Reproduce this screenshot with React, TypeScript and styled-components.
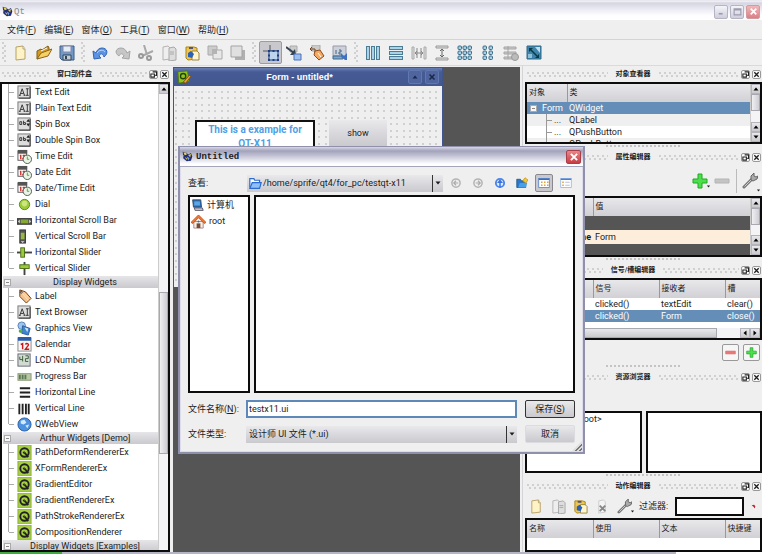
import React from "react";
import type { ReactNode } from "react";
import styled, { createGlobalStyle, css } from "styled-components";

const sans = `Roboto, "Noto Sans CJK SC", sans-serif`;
const ink = "#1c1c1c";

const GlobalStyle = createGlobalStyle`
  * { box-sizing: border-box; }
  body { margin: 0; background: #efefef; }
  body, button, input, select { font-family: ${sans}; font-size: 9px; line-height: 12px; color: ${ink}; }
  button, input, select { margin: 0; padding: 0; border: 0; background: none; }
  ul { list-style: none; margin: 0; padding: 0; }
  table { border-collapse: collapse; border-spacing: 0; }
  svg { display: block; flex: none; }
`;

/* ---------- icons ---------- */

const page = (x: number, y: number, fill: string, line: string) => (
  <path d={`M${x} ${y + 1}l5-1 2 2v11l-7 1z`} fill={fill} stroke={line} />
);

const calendarClock = (
  <>
    <rect x="1" y="2" width="9" height="10" fill="#fff" stroke="#555" />
    <rect x="1" y="1" width="10" height="4" fill="#555" />
    <path d="M3 7h1v4M6 7h2l-2 4" stroke="#c33" strokeWidth="1.500" fill="none" />
    <circle cx="11" cy="11" r="4.5" fill="#e8f4e4" stroke="#555" />
    <path d="M11 8v3h2" stroke="#4a4" fill="none" />
  </>
);

const textBox = (
  <>
    <rect x="1" y="1" width="13" height="13" fill="#ddd" stroke="#777" />
    <path d="M14 2v12H2" stroke="#333" fill="none" />
    <path d="M3 11l2.500-7L8 11M4 9h3M2 11h2M7 11h2M9.500 4h3M9.500 11h3M11 4v7" stroke="#333" fill="none" />
  </>
);

const spinBox = (
  <>
    <rect x="1" y="1" width="13" height="13" fill="#ddd" stroke="#777" />
    <path d="M14 2v12H2" stroke="#333" fill="none" />
    <path d="M3 5v3h2V5zM7 4v4h2V6H7" stroke="#333" fill="none" />
    <path d="M10 5l2-3 2 3zM10 7l2 3 2-3z" fill="#222" />
  </>
);

const demo = (
  <>
    <rect x="1" y="0" width="14" height="16" fill="#a6cf45" stroke="#8ab036" />
    <circle cx="8" cy="8" r="4.500" fill="none" stroke="#222" strokeWidth="2" />
    <path d="M8 8l4 5" stroke="#222" strokeWidth="2" />
    <path d="M6 8l2-2v4z" fill="#222" />
  </>
);

const tag = (
  <>
    <path d="M3 1l6 2 6 7-5 5-7-7z" fill="#f6c48c" stroke="#6a3a10" />
    <path d="M6 5l6 7M8 5l4 4" stroke="#fbe8cc" />
    <circle cx="4.500" cy="3.500" r="1" fill="#fff" stroke="#333" />
  </>
);

const grid3 = (xs: number[]) => (
  <>
    {xs.map((x) =>
      [3, 8, 13].map((y) => (
        <rect key={`${x}-${y}`} x={x - 2} y={y - 2} width="3.500" height="3.500" rx="1" fill="#a4cfe4" stroke="#3d6c85" />
      ))
    )}
  </>
);

const paste = (
  <>
    <path d="M2 2h8l3 1v11l-9 1-2-2z" fill="#f0c64a" stroke="#a8841c" />
    <path d="M8 6h5l2 2v7H8z" fill="#fff6cf" stroke="#998544" />
    <path d="M5 2h4v2H5z" fill="#557" />
    <path d="M4 8l3-2 3 3-2 4-4-1z" fill="#2b62b8" />
  </>
);

const copy = (
  <>
    {page(2, 1, "#eee", "#b4b4b4")}
    {page(8, 2, "#ddd", "#a8a8a8")}
    <path d="M9 7h4M9 9h4" stroke="#a8a8a8" />
  </>
);

const wrench = (
  <>
    <path d="M2 14l8-8" stroke="#777" strokeWidth="3" strokeLinecap="round" />
    <path d="M2.500 13.500l8-8" stroke="#ccc" />
    <path d="M9 7V3l3-3v3l2 1 2-1-1 3-4 2z" fill="#aaa" stroke="#666" />
  </>
);

const plus = (
  <path d="M6 1h4v5h5v4h-5v5H6v-5H1V6h5z" fill="#4be04b" stroke="#20a820" />
);

const icons: Record<string, ReactNode> = {
  qt: (
    <>
      <path d="M1 1l5 1 3 3 4-2 2 5-2 6-6 1-5-4z" fill="#232a78" />
      <path d="M2 2h4l1 3-3 1zM9 6l4-2-1 5zM4 9l3 1v3z" fill="#e4d548" />
      <path d="M7 8l4 2-2 4zM1 6h2v3z" fill="#6fa6dc" />
    </>
  ),
  new: (
    <>
      <path d="M3 2l7-1 2 3v10l-9 1z" fill="#fdf3c6" stroke="#b7a168" />
      <path d="M10 1v3h2" fill="#fff" stroke="#b7a168" />
    </>
  ),
  open: (
    <>
      <path d="M1 14V6l4-2 1 1 6-4 1 2v5z" fill="#d59a23" stroke="#7d5a15" />
      <path d="M1 14l4-6 11-4-4 7z" fill="#f6cf66" stroke="#8a6418" />
      <path d="M5 6l6-3" stroke="#fff" />
    </>
  ),
  save: (
    <>
      <path d="M1 1h14v14H3l-2-2z" fill="#6f9ac8" stroke="#3c5c84" />
      <path d="M4 1h8v6H4z" fill="#e4edf5" stroke="#88a" />
      <path d="M4 10h8v5H4z" fill="#c4ced8" stroke="#345" />
      <path d="M6 11h2v3H6z" fill="#345" />
    </>
  ),
  undo: (
    <>
      <path d="M1 6l1 8 7-1-2-2c1-3 4-3 5 1 5-4 3-9-2-9-3 0-5 2-6 5z" fill="#5c94e4" stroke="#3263b4" />
      <path d="M5 8c2-3 6-4 8-1" stroke="#b7d4f8" fill="none" />
    </>
  ),
  redo: (
    <path d="M15 6l-1 8-7-1 2-2C8 8 5 8 4 11-1 8 1 3 6 3c3 0 5 2 6 5z" fill="#c6c6c6" stroke="#a4a4a4" />
  ),
  cut: (
    <>
      <path d="M6 0l3 10M15 6L4 11" stroke="#a8a8a8" strokeWidth="2" />
      <circle cx="3" cy="11" r="2" fill="none" stroke="#999" strokeWidth="2" />
      <circle cx="11" cy="13" r="2" fill="none" stroke="#999" strokeWidth="2" />
    </>
  ),
  copy,
  paste,
  back: (
    <>
      <path d="M1 1h9v9H1z" fill="#ccc" stroke="#aaa" />
      <path d="M6 5h9v9H6z" fill="#e8e8e8" stroke="#aaa" />
      <path d="M5 4h5v5H5z" fill="#b4b4b4" />
    </>
  ),
  front: (
    <>
      <path d="M5 5h10v10H5z" fill="#b0b0b0" />
      <path d="M1 1h11v11H1z" fill="#e0e0e0" stroke="#a4a4a4" />
    </>
  ),
  widgets: (
    <>
      <path d="M7 0v8M0 6h16M5 14h4" stroke="#555" />
      <rect x="6" y="6" width="9" height="9" fill="#bcd4ee" stroke="#1c3e86" />
      <path d="M5 5h2v2H5zM9.500 5h2v2h-2zM14 5h2v2h-2zM5 9.500h2v2H5zM14 9.500h2v2h-2zM5 14h2v2H5zM9.500 14h2v2h-2zM14 14h2v2h-2z" fill="#1c3e86" />
    </>
  ),
  signals: (
    <>
      <path d="M4 1h7v6H4z" fill="#ccc" stroke="#aaa" />
      <path d="M0 2l8 6" stroke="#345" strokeWidth="2" />
      <path d="M10 10H4l5-6z" fill="#345" />
      <path d="M8 9h7v6H8z" fill="#9cc0f0" stroke="#4c72b8" />
    </>
  ),
  buddies: (
    <>
      <path d="M3 0h8v6H3z" fill="#ccc" stroke="#aaa" />
      <path d="M1 4h5v4M1 4l2-2M1 4l2 2" stroke="#742" fill="none" />
      <path d="M6 6l5-1 4 6-5 4-5-5z" fill="#f4a860" stroke="#8e4d1c" />
      <path d="M9 8l3 4" stroke="#fff" />
    </>
  ),
  taborder: (
    <>
      <path d="M1 1h13v10H1z" fill="#cdd2da" stroke="#99a" />
      <path d="M4 5v4M7 5h2v2H7v2h2" stroke="#468" fill="none" />
      <path d="M1 11h10v3H1z" fill="#78a9d8" stroke="#468" />
      <path d="M9 8l3 3 3-3v7h-2l-4-3z" fill="#3f73c2" />
    </>
  ),
  horiz: (
    <>
      {[1, 6, 11].map((x) => (
        <rect key={x} x={x + 0.5} y="1.500" width="3" height="13" fill="#a9d3e8" stroke="#4d7c95" />
      ))}
    </>
  ),
  vert: (
    <>
      {[1, 6, 11].map((y) => (
        <rect key={y} x="1.500" y={y + 0.5} width="13" height="3" fill="#a9d3e8" stroke="#4d7c95" />
      ))}
    </>
  ),
  hsplit: (
    <>
      <path d="M1 2h2v12H1zM13 2h2v12h-2z" fill="#ddd" stroke="#aaa" />
      <path d="M6 3v10M10 3v10M4 8h8M6 6L4 8l2 2M10 6l2 2-2 2" stroke="#888" fill="none" />
    </>
  ),
  vsplit: (
    <>
      <path d="M2 1h12v2H2zM2 13h12v2H2z" fill="#ddd" stroke="#999" />
      <path d="M8 4v8M6 6l2-2 2 2M6 10l2 2 2-2" stroke="#666" fill="none" />
    </>
  ),
  grid: grid3([3, 8, 13]),
  form: grid3([5, 11]),
  breakLayout: (
    <>
      <path d="M1 2h12v2H1zM1 7h12v2H1zM1 12h8v2H1z" fill="#ccc" stroke="#a4a4a4" />
      <path d="M5 1v13" stroke="#a4a4a4" />
      <circle cx="12" cy="12" r="3.500" fill="#bbb" stroke="#999" />
    </>
  ),
  adjust: (
    <>
      <path d="M1 1h14v13H1z" fill="#3f84ac" stroke="#2f6a8c" />
      <path d="M9 2h5v6z" fill="#bfe0ee" />
      <path d="M2 9h4v4H2z" fill="#8fc0d8" />
      <path d="M4 4l7 7" stroke="#0b3a44" strokeWidth="1.500" />
      <path d="M3 3h4L3 7zM13 13V9l-4 4z" fill="#0b3a44" />
    </>
  ),
  textBox,
  spinBox,
  calendarClock,
  dial: (
    <>
      <circle cx="8" cy="8" r="5.500" fill="#9ccb3a" stroke="#5d8a1c" />
      <circle cx="8" cy="7" r="3" fill="#cbe67f" />
    </>
  ),
  hscroll: (
    <>
      <rect x="0" y="6" width="16" height="6" fill="#555" stroke="#333" />
      <rect x="4" y="7" width="8" height="4" fill="#86a934" />
      <path d="M3 7v4L1 9zM13 7v4l2-2z" fill="#ddd" />
    </>
  ),
  vscroll: (
    <>
      <rect x="3" y="1" width="6" height="14" fill="#555" stroke="#333" />
      <rect x="4" y="4" width="4" height="7" fill="#96b944" />
      <path d="M4 13h4l-2 2z" fill="#ddd" />
    </>
  ),
  hslider: (
    <>
      <path d="M0 8h16" stroke="#444" strokeWidth="2" />
      <rect x="4" y="3" width="4" height="10" fill="#9ccb3a" stroke="#4d6f18" />
    </>
  ),
  vslider: (
    <>
      <path d="M8 1v14" stroke="#444" strokeWidth="2" />
      <rect x="3" y="4" width="10" height="4" fill="#9ccb3a" stroke="#4d6f18" />
    </>
  ),
  tag,
  graphics: (
    <>
      <circle cx="5" cy="5" r="4" fill="#9cc6ee" stroke="#5581bb" />
      <path d="M6 5l8 3-2 7-7-2z" fill="#3e84d4" stroke="#2d5d9c" />
      <path d="M2 9l4 1-1 3-3-1z" fill="#5a4" />
      <path d="M8 7l4 1-1 4z" fill="#cfe6fb" />
    </>
  ),
  calendar: (
    <>
      <rect x="1" y="1" width="14" height="14" fill="#f6f6f6" stroke="#888" />
      <rect x="1" y="0" width="14" height="4" fill="#2c5ea8" />
      <path d="M4 8l2-1v6M9 8c1-2 4-1 3 1l-3 4h4" stroke="#c8181c" strokeWidth="1.500" fill="none" />
    </>
  ),
  lcd: (
    <>
      <rect x="1" y="1" width="13" height="13" fill="#d0dccf" stroke="#667" />
      <path d="M3 4v3h3M6 3v6M9 3h3v3H9v3h3" stroke="#385a38" fill="none" />
    </>
  ),
  progress: (
    <>
      <rect x="1" y="5" width="14" height="7" fill="#b9c8a4" stroke="#889978" />
      <path d="M3 6v5M6 6v5M9 6v5" stroke="#5d7855" strokeWidth="2" />
    </>
  ),
  hline: <path d="M3 3.500h11M3 8h11M3 12.500h11" stroke="#222" strokeWidth="2" />,
  vline: <path d="M2.500 3v11M6 3v11M9.500 3v11M12.500 3v11" stroke="#222" strokeWidth="2" />,
  web: (
    <>
      <circle cx="8" cy="8" r="7" fill="#4d92e0" stroke="#2a5da8" />
      <path d="M4 4l4-1 2 3-3 2-3-1zM9 9l4-1-2 4z" fill="#d6e9fb" />
    </>
  ),
  demo,
  designer: (
    <>
      <path d="M1 2l11-1 2 12-12 2z" fill="#8fc31f" stroke="#4f7a10" />
      <circle cx="7" cy="7" r="3" fill="none" stroke="#244006" strokeWidth="1.500" />
      <path d="M7 14l7-8 2 1-6 8z" fill="#f0a030" stroke="#7a4a10" />
    </>
  ),
  plus,
  redMinus: <path d="M1 6h14v4H1z" fill="#e87878" stroke="#d86a6a" />,
  minus: <path d="M1 6h14v4H1z" fill="#c4c4c4" stroke="#b4b4b4" />,
  wrench,
  remove: (
    <>
      {page(4, 1, "#f4f4f4", "#ccc")}
      <path d="M5 7l6 6M11 7l-6 6" stroke="#888" strokeWidth="2" />
    </>
  ),
  clear: <path d="M2 4l8-2 4 5-2 7-4-5z" fill="#c8202c" />,
  folder: (
    <>
      <path d="M1 13V2h5l1 2h6v3" fill="#fff" stroke="#2c6cd0" strokeWidth="1.500" />
      <path d="M1 14l3-7h11l-2 7z" fill="#8fc0f8" stroke="#2c6cd0" strokeWidth="1.500" />
    </>
  ),
  prev: (
    <>
      <circle cx="8" cy="8" r="5.500" fill="#eee" stroke="#b4b4b4" strokeWidth="2" />
      <path d="M5 8h6M8 5L5 8l3 3" stroke="#aaa" strokeWidth="1.500" fill="none" />
    </>
  ),
  next: (
    <>
      <circle cx="8" cy="8" r="5.500" fill="#eee" stroke="#b4b4b4" strokeWidth="2" />
      <path d="M5 8h6M8 5l3 3-3 3" stroke="#aaa" strokeWidth="1.500" fill="none" />
    </>
  ),
  up: (
    <>
      <circle cx="8" cy="8" r="5.500" fill="#dfeeff" stroke="#4a84ec" strokeWidth="2.500" />
      <path d="M8 3l4 5H9v6H7V8H4z" fill="#3a74dc" />
    </>
  ),
  newFolder: (
    <>
      <path d="M1 3h5l1 2h6v9H1z" fill="#2c78c8" stroke="#1c5088" />
      <path d="M3 14l2-6h10l-2 6z" fill="#48a0e8" />
      <path d="M12 1l4 3-3 4-4-3z" fill="#f6c832" stroke="#c89010" />
    </>
  ),
  listView: (
    <>
      <rect x="1" y="2" width="14" height="12" fill="#fff" stroke="#4878c8" />
      <path d="M1 3h14" stroke="#3a6cc4" strokeWidth="2" />
      <path d="M4 7h2M8 7h2M12 7h2M4 11h2M8 11h2M12 11h2" stroke="#e0a040" strokeWidth="2" />
    </>
  ),
  detailView: (
    <>
      <rect x="1" y="2" width="14" height="12" fill="#fff" stroke="#8cb0e0" />
      <path d="M1 3h14" stroke="#4a80d4" strokeWidth="2" />
      <path d="M3 7h2M3 11h2" stroke="#e0a040" strokeWidth="2" />
      <path d="M7 7h6M7 11h6" stroke="#aac" />
    </>
  ),
  computer: (
    <>
      <path d="M2 1h10l1 9H3z" fill="#2b6db8" stroke="#345" />
      <path d="M4 3h7v5H4z" fill="#5aa8e8" />
      <path d="M4 11h10l1 3H5z" fill="#ccd" stroke="#445" />
    </>
  ),
  home: (
    <>
      <path d="M3 8h10v7H3z" fill="#f4efe8" stroke="#a88" />
      <path d="M0 9l8-8 8 8-2 1-6-6-6 6z" fill="#f07830" stroke="#c05420" />
      <path d="M6 10h4v5H6z" fill="#7a4a32" />
      <circle cx="8" cy="8" r="1" fill="#468" />
    </>
  ),
  float: (
    <>
      <path d="M6 2h9v8h-3" fill="none" stroke="#222" strokeWidth="2.500" />
      <path d="M2 7h8v7H2z" fill="#fff" stroke="#222" strokeWidth="2.500" />
    </>
  ),
  cross: <path d="M3 3l10 10M13 3L3 13" stroke="currentColor" strokeWidth="3" />,
  minimize: <path d="M3 12h7" stroke="currentColor" strokeWidth="3" />,
  maximize: <path d="M2 3h12v11H2zM2 5h12" fill="none" stroke="currentColor" strokeWidth="2" />,
  arrowUp: <path d="M3 11l5-6 5 6z" fill="currentColor" />,
  arrowDown: <path d="M3 5l5 6 5-6z" fill="currentColor" />,
  arrowLeft: <path d="M11 3L5 8l6 5z" fill="currentColor" />,
  arrowRight: <path d="M5 3l6 5-6 5z" fill="currentColor" />,
};

const Icon = ({ name, size = 16 }: { name: string; size?: number }) => (
  <svg width={size} height={size} viewBox="0 0 16 16" aria-hidden="true">
    {icons[name]}
  </svg>
);

/* ---------- shared parts ---------- */

const raised = css`
  background: linear-gradient(#e9e9ec, #c9c9ce);
`;

const dotRows = css`
  background-image: radial-gradient(circle at 1px 1px, #d0d0d0 1px, transparent 1px),
    radial-gradient(circle at 3px 4px, #d0d0d0 1px, transparent 1px);
  background-size: 5px 5px;
`;

const Page = styled.div`
  display: flex;
  flex-direction: column;
  height: 100vh;
  overflow: hidden;
  background: #efefef;
`;

const TitleBar = styled.header`
  display: flex;
  align-items: center;
  gap: 1px;
  height: 20px;
  padding: 3px 2px 0;
  background: linear-gradient(#dcdce4 0, #f4f4f8 1px, #d6d6e2 3px, #e6e6ef 8px, #fdfdff 15px, #fff 19px);
`;

const AppName = styled.h1`
  flex: 1;
  margin: 0;
  font: 9px/12px "Liberation Mono", monospace;
  color: #888;
`;

const FrameButton = styled.button<{ $close?: boolean }>`
  display: grid;
  place-items: center;
  width: 14px;
  height: 14px;
  margin-left: 1px;
  border: 1px solid ${(p) => (p.$close ? "#d49a9e" : "#b4b4c4")};
  border-radius: 2px;
  background: ${(p) => (p.$close ? "linear-gradient(#f0b8b8, #d98088)" : "linear-gradient(#f4f4fa, #cfcfdc)")};
  color: ${(p) => (p.$close ? "#fff" : "#9c9cae")};
`;

const MenuBar = styled.nav`
  display: flex;
  align-items: center;
  gap: 8px;
  height: 20px;
  padding-left: 7px;
  border-bottom: 1px solid #d4d4d4;
`;

const MenuItem = styled.button`
  white-space: nowrap;
`;

const ToolBar = styled.div`
  display: flex;
  align-items: center;
  gap: 10px;
  height: 26px;
  padding-left: 9px;
  border-bottom: 1px solid #dadada;
  background: #f0f0f0;
`;

const ToolGroup = styled.div`
  position: relative;
  display: flex;
  &::before {
    content: "";
    position: absolute;
    left: -7px;
    top: 1px;
    width: 5px;
    height: 20px;
    ${dotRows}
  }
`;

const ToolButton = styled.button<{ $active?: boolean }>`
  display: grid;
  place-items: center;
  width: 23px;
  height: 23px;
  border: 1px solid ${(p) => (p.$active ? "#9c9ca0" : "transparent")};
  border-radius: 2px;
  background: ${(p) => (p.$active ? "#c9c9cd" : "none")};
`;

const Workspace = styled.main`
  flex: 1;
  min-height: 0;
  display: grid;
  grid-template-columns: 170px minmax(0, 1fr) 240px;
  column-gap: 2px;
`;

const Dock = styled.aside`
  display: flex;
  flex-direction: column;
  min-height: 0;
  overflow: hidden;
`;

const RightDock = styled(Dock)`
  padding-left: 2px;
  border-left: 1px solid #d4d4d8;
`;

const DockTitle = styled.div`
  display: flex;
  align-items: center;
  flex: none;
  gap: 2px;
  height: 16px;
  padding: 0 1px 0 2px;
`;

const Grip = styled.span`
  flex: 1;
  height: 5px;
  ${dotRows}
`;

const DockName = styled.h2`
  margin: 0;
  padding: 0 6px;
  font-size: 7px;
  line-height: 12px;
  font-weight: 600;
`;

const DockButton = styled.button`
  display: grid;
  place-items: center;
  width: 9px;
  height: 9px;
  border: 1px solid #999;
  border-radius: 2px;
  background: #fafafa;
`;

const Splitter = styled.div`
  flex: none;
  height: 5px;
  padding: 1px 0;
  &::before {
    content: "";
    display: block;
    width: 76px;
    height: 2px;
    margin: 0 auto;
    background: radial-gradient(circle at 1px 1px, #c4c4c4 1px, transparent 1px) 0 0 / 4px 2px;
  }
`;

const Box = styled.div<{ $height?: number; $grow?: boolean }>`
  display: flex;
  min-width: 0;
  overflow: hidden;
  border: 2px solid #0c0c0c;
  background: #fff;
  flex: ${(p) => (p.$grow ? "1 1 0" : "none")};
  height: ${(p) => (p.$height ? `${p.$height}px` : "auto")};
`;

const Scroll = styled.div`
  display: flex;
  flex-direction: column;
  flex: none;
  width: 10px;
  background: #f4f4f6;
  border-left: 1px solid #ccc;
`;

const ScrollButton = styled.button`
  display: grid;
  place-items: center;
  flex: none;
  width: 10px;
  height: 10px;
  border: 1px solid #b4b4bc;
  ${raised}
  color: #000;
`;

const Thumb = styled.div<{ $before?: number; $size: number }>`
  flex: none;
  margin-top: ${(p) => p.$before ?? 0}px;
  margin-bottom: auto;
  height: ${(p) => p.$size}px;
  border: 1px solid #a8a8b0;
  background: linear-gradient(90deg, #f0f0f3, #cdcdd3);
`;

/* ---------- widget box ---------- */

const WidgetList = styled.div`
  flex: 1;
  min-width: 0;
  padding-left: 1px;
`;

const GroupHead = styled.button`
  display: flex;
  align-items: center;
  width: 100%;
  height: 12px;
  background: linear-gradient(#e6e6e9, #c9c9ce);
`;

const GroupName = styled.span`
  flex: 1;
  text-align: center;
`;

const Expander = styled.span`
  display: grid;
  place-items: center;
  flex: none;
  width: 7px;
  height: 7px;
  margin: 0 1px;
  border: 1px solid #aaa;
  background: #f8f8f8;
  &::before {
    content: "";
    width: 3px;
    height: 1px;
    background: #888;
  }
`;

const WidgetRow = styled.li`
  display: flex;
  align-items: center;
  gap: 3px;
  height: 16px;
  margin-left: 5px;
  border-left: 1px solid #aaa;
  white-space: nowrap;
  &::before {
    content: "";
    width: 5px;
    height: 1px;
    background: #aaa;
  }
  &:last-child {
    border-image: linear-gradient(#aaa 50%, transparent 50%) 1;
  }
`;

type Group = { name?: string; items: [string, string][] };

const groups: Group[] = [
  {
    items: [
      ["textBox", "Text Edit"],
      ["textBox", "Plain Text Edit"],
      ["spinBox", "Spin Box"],
      ["spinBox", "Double Spin Box"],
      ["calendarClock", "Time Edit"],
      ["calendarClock", "Date Edit"],
      ["calendarClock", "Date/Time Edit"],
      ["dial", "Dial"],
      ["hscroll", "Horizontal Scroll Bar"],
      ["vscroll", "Vertical Scroll Bar"],
      ["hslider", "Horizontal Slider"],
      ["vslider", "Vertical Slider"],
    ],
  },
  {
    name: "Display Widgets",
    items: [
      ["tag", "Label"],
      ["textBox", "Text Browser"],
      ["graphics", "Graphics View"],
      ["calendar", "Calendar"],
      ["lcd", "LCD Number"],
      ["progress", "Progress Bar"],
      ["hline", "Horizontal Line"],
      ["vline", "Vertical Line"],
      ["web", "QWebView"],
    ],
  },
  {
    name: "Arthur Widgets [Demo]",
    items: [
      ["demo", "PathDeformRendererEx"],
      ["demo", "XFormRendererEx"],
      ["demo", "GradientEditor"],
      ["demo", "GradientRendererEx"],
      ["demo", "PathStrokeRendererEx"],
      ["demo", "CompositionRenderer"],
    ],
  },
  { name: "Display Widgets [Examples]", items: [] },
];

/* ---------- form window ---------- */

const Mdi = styled.section`
  position: relative;
  margin: 1px 0 0 1px;
  background: #555;
`;

const FormWindow = styled.article`
  position: absolute;
  left: 0;
  top: 0;
  width: 270px;
  height: 221px;
  border: 1px solid #40558c;
  background: #efefef;
`;

const FormTitle = styled.div`
  display: flex;
  align-items: center;
  gap: 3px;
  height: 18px;
  padding: 0 3px;
  background: linear-gradient(#6a80b4, #465b96 4px, #43588f);
  color: #fff;
`;

const FormName = styled.h2`
  flex: 1;
  margin: 0;
  text-align: center;
  font: bold 9px/12px "Liberation Sans", sans-serif;
`;

const FormButton = styled.button`
  display: grid;
  place-items: center;
  width: 14px;
  height: 14px;
  border: 1px solid #6078ae;
  border-radius: 2px;
  background: #4f659f;
  color: #1b2748;
`;

const FormCanvas = styled.div`
  display: flex;
  align-items: flex-start;
  gap: 14px;
  height: 200px;
  padding: 34px 21px;
  background-image: radial-gradient(circle at 2px 6px, #d0d0d0 1px, transparent 1px),
    radial-gradient(circle at 9px 6px, #d0d0d0 1px, transparent 1px),
    radial-gradient(circle at 2px 12px, #d0d0d0 1px, transparent 1px),
    radial-gradient(circle at 9px 12px, #d0d0d0 1px, transparent 1px);
  background-size: 13px 13px;
`;

const ExampleText = styled.p`
  width: 120px;
  height: 60px;
  margin: 0;
  border: 2px solid #111;
  background: #fff;
  color: #4f9fe6;
  text-align: center;
  font-weight: 700;
  font-size: 10px;
  line-height: 14px;
  padding: 1px 6px;
`;

const ShowButton = styled.button`
  width: 58px;
  height: 26px;
  ${raised}
`;

/* ---------- data tables ---------- */

const Table = styled.table`
  width: 100%;
  table-layout: fixed;
  align-self: flex-start;
  th {
    height: 18px;
    padding: 0 2px;
    text-align: left;
    font-weight: 400;
    font-size: 8px;
    white-space: nowrap;
    border-right: 1px solid #999;
    background: linear-gradient(#e8e8eb, #d0d0d5);
  }
  th:last-child { border-right: 0; }
  td {
    height: 12px;
    padding: 0 2px;
    line-height: 12px;
    white-space: nowrap;
    overflow: hidden;
  }
`;

const Row = styled.tr<{ $tone?: "selected" | "even" | "dark" | "cream" }>`
  ${(p) => p.$tone === "selected" && css`background: #648eb8; color: #fff;`}
  ${(p) => p.$tone === "even" && css`background: #efefef;`}
  ${(p) => p.$tone === "dark" && css`background: #555; td { height: 14px; }`}
  ${(p) => p.$tone === "cream" && css`background: #fdeedb; td { height: 14px; }`}
`;

const FirstCell = styled.div`
  display: flex;
  align-items: center;
  gap: 4px;
`;

const Branch = styled.div`
  margin-left: 17px;
  padding-left: 7px;
  border-left: 1px solid #999;
  background: linear-gradient(#999, #999) 0 6px / 5px 1px no-repeat;
`;

const PropName = styled.td`
  text-align: right;
  font-weight: 700;
`;

const Stack = styled.div`
  display: flex;
  flex-direction: column;
  width: 100%;
`;

const HScroll = styled.div`
  display: flex;
  flex: none;
  height: 10px;
  margin-top: auto;
  background: #f4f4f6;
`;

const HThumb = styled.div`
  width: 190px;
  margin-right: auto;
  border: 1px solid #a8a8b0;
  ${raised}
`;

const PropTools = styled.div`
  display: flex;
  align-items: center;
  justify-content: flex-end;
  flex: none;
  gap: 6px;
  height: 31px;
  padding-right: 4px;
`;

const PropButton = styled.button<{ $divided?: boolean }>`
  position: relative;
  display: flex;
  ${(p) => p.$divided && css`border-left: 1px solid #bbb; padding: 4px 0 4px 5px;`}
`;

const MenuMark = styled.span`
  position: absolute;
  right: -3px;
  bottom: 0;
`;

const SignalTools = styled.div`
  display: flex;
  align-items: center;
  justify-content: flex-end;
  flex: none;
  gap: 4px;
  height: 24px;
  padding-right: 2px;
`;

const SquareButton = styled.button`
  display: grid;
  place-items: center;
  width: 17px;
  height: 17px;
  border: 1px solid #999;
  border-radius: 2px;
  background: #f6f6f6;
`;

const Resources = styled.div`
  display: flex;
  flex: none;
  gap: 4px;
  margin-top: 26px;
`;

const ResourceBox = styled(Box)`
  flex: 1;
  height: 62px;
  padding: 0 0 0 12px;
`;

const ActionTools = styled.div`
  display: flex;
  align-items: center;
  flex: none;
  gap: 7px;
  height: 24px;
  padding: 0 6px 0 4px;
`;

const FilterLabel = styled.label`
  white-space: nowrap;
`;

const FilterInput = styled.input`
  flex: 1;
  min-width: 0;
  height: 19px;
  border: 2px solid #0c0c0c;
  background: #fff;
`;

const BottomEdge = styled.footer`
  flex: none;
  height: 2px;
  background: linear-gradient(90deg, #3faa3f 62px, #b4b4c4 62px, #b4b4c4 676px, #fff 676px);
`;

/* ---------- file dialog ---------- */

const Dialog = styled.section`
  position: absolute;
  left: 178px;
  top: 146px;
  width: 407px;
  height: 308px;
  display: flex;
  flex-direction: column;
  border: 2px solid #8f90ac;
  border-top-width: 1px;
  background: #efefef;
  box-shadow: inset 0 0 0 1px #dcdcea;
`;

const DialogTitle = styled.div`
  display: flex;
  align-items: center;
  gap: 3px;
  flex: none;
  height: 20px;
  padding: 0 2px;
  border-bottom: 1px solid #a4a4ba;
  background: linear-gradient(#d8d8e4, #a2a2bc 4px, #c4c4d6 9px, #fff 17px);
`;

const DialogName = styled.h2`
  flex: 1;
  margin: 0;
  font: bold 9px/12px "Liberation Mono", monospace;
`;

const CloseButton = styled.button`
  display: grid;
  place-items: center;
  width: 15px;
  height: 14px;
  border: 1px solid #a8404a;
  border-radius: 2px;
  background: linear-gradient(#e88888, #c83c44);
  color: #fff;
`;

const DialogBody = styled.form`
  flex: 1;
  display: grid;
  grid-template-columns: 50px minmax(0, 1fr) 50px;
  grid-template-rows: 18px 199px;
  column-gap: 8px;
  align-content: start;
  padding: 7px 8px;
`;

const LookRow = styled.div`
  grid-column: 2 / 4;
  display: flex;
  align-items: center;
  justify-content: space-between;
  margin-left: 1px;
`;

const Lists = styled.div`
  grid-column: 1 / 4;
  display: grid;
  grid-template-columns: 62px minmax(0, 1fr);
  gap: 4px;
  padding-top: 3px;
  margin-bottom: -2px;
`;

const ListBox = styled.ul`
  border: 2px solid #0c0c0c;
  background: #fff;
`;

const Place = styled.li`
  display: flex;
  align-items: center;
  gap: 3px;
  height: 16px;
  padding-left: 1px;
`;

const FieldLabel = styled.label`
  align-self: center;
  white-space: nowrap;
`;

const Combo = styled.div<{ $width?: number }>`
  position: relative;
  display: flex;
  align-items: center;
  align-self: center;
  width: ${(p) => (p.$width ? `${p.$width}px` : "100%")};
  height: 17px;
  ${raised}
`;

const ComboMark = styled.span`
  position: absolute;
  right: 0;
  top: 0;
  display: grid;
  place-items: center;
  width: 11px;
  height: 100%;
  border-left: 1px solid #333;
  pointer-events: none;
`;

const Select = styled.select<{ $icon?: boolean }>`
  appearance: none;
  width: 100%;
  height: 100%;
  padding-left: ${(p) => (p.$icon ? 1 : 3)}px;
`;

const IconPad = styled.span`
  padding-left: 2px;
`;

const ViewButton = styled.button<{ $active?: boolean }>`
  display: grid;
  place-items: center;
  width: 18px;
  height: 18px;
  border: 1px solid ${(p) => (p.$active ? "#88888e" : "transparent")};
  border-radius: 2px;
  background: ${(p) => (p.$active ? "#c9c9cd" : "none")};
`;

const Fields = styled.div`
  grid-column: 1 / 4;
  display: grid;
  grid-template-columns: 50px minmax(0, 1fr) 50px;
  grid-auto-rows: 18px;
  gap: 7px 8px;
  padding-top: 9px;
`;

const NameInput = styled.input`
  align-self: center;
  width: 100%;
  height: 18px;
  padding: 0 1px;
  border: 2px solid #5e88b8;
  background: #fff;
`;

const DialogButton = styled.button<{ $default?: boolean }>`
  height: 18px;
  border: 1px solid ${(p) => (p.$default ? "#333" : "#dcdce0")};
  border-radius: 2px;
  ${raised}
`;

const SizeGrip = styled.span`
  position: absolute;
  right: 1px;
  bottom: 1px;
  width: 10px;
  height: 10px;
  clip-path: polygon(100% 0, 100% 100%, 0 100%);
  background: repeating-linear-gradient(135deg, #777 0 1px, #ddd 1px 3px);
`;

/* ---------- composition ---------- */

const Title = ({ children }: { children: ReactNode }) => (
  <DockTitle>
    <Grip />
    <DockName>{children}</DockName>
    <Grip />
    <DockButton aria-label="Float"><Icon name="float" size={7} /></DockButton>
    <DockButton aria-label="Close"><Icon name="cross" size={7} /></DockButton>
  </DockTitle>
);

const ShortScroll = () => (
  <Scroll>
    <ScrollButton aria-label="Scroll up"><Icon name="arrowUp" size={8} /></ScrollButton>
    <Thumb $size={17} />
    <ScrollButton aria-label="Page up"><Icon name="arrowUp" size={8} /></ScrollButton>
    <ScrollButton aria-label="Scroll down"><Icon name="arrowDown" size={8} /></ScrollButton>
  </Scroll>
);

type ToolIconProps = { name: string; label: string; size?: number; menu?: boolean; divided?: boolean };

const ToolIcon = ({ name, label, size = 15, menu, divided }: ToolIconProps) => (
  <PropButton aria-label={label} $divided={divided}>
    <Icon name={name} size={size} />
    {menu && <MenuMark><Icon name="arrowDown" size={5} /></MenuMark>}
  </PropButton>
);

const menus: [string, string][] = [
  ["文件", "F"],
  ["编辑", "E"],
  ["窗体", "O"],
  ["工具", "T"],
  ["窗口", "W"],
  ["帮助", "H"],
];

const tools = [
  ["new", "open", "save"],
  ["undo", "redo", "cut", "copy", "paste", "back", "front"],
  ["widgets", "signals", "buddies", "taborder"],
  ["horiz", "vert", "hsplit", "vsplit", "grid", "form", "breakLayout", "adjust"],
];

const WidgetBox = () => (
  <Dock>
    <Title>窗口部件盒</Title>
    <Box $grow>
      <WidgetList>
        {groups.map((group, i) => (
          <section key={i}>
            {group.name && (
              <GroupHead>
                <Expander />
                <GroupName>{group.name}</GroupName>
              </GroupHead>
            )}
            <ul>
              {group.items.map(([icon, label]) => (
                <WidgetRow key={label}>
                  <Icon name={icon} size={15} />
                  {label}
                </WidgetRow>
              ))}
            </ul>
          </section>
        ))}
      </WidgetList>
      <Scroll>
        <ScrollButton aria-label="Scroll up"><Icon name="arrowUp" size={8} /></ScrollButton>
        <Thumb $before={198} $size={162} />
      </Scroll>
    </Box>
  </Dock>
);

const Inspectors = () => (
  <RightDock>
    <Title>对象查看器</Title>
    <Box $height={62}>
      <Table>
        <colgroup><col width="40" /><col /></colgroup>
        <thead><tr><th>对象</th><th>类</th></tr></thead>
        <tbody>
          <Row $tone="selected">
            <td><FirstCell><Expander />Form</FirstCell></td>
            <td>QWidget</td>
          </Row>
          <Row $tone="even"><td><Branch>...</Branch></td><td>QLabel</td></Row>
          <Row><td><Branch>...</Branch></td><td>QPushButton</td></Row>
          <Row $tone="even"><td><Branch>...</Branch></td><td>QPushButton</td></Row>
        </tbody>
      </Table>
      <ShortScroll />
    </Box>
    <Splitter />

    <Title>属性编辑器</Title>
    <PropTools>
      <ToolIcon name="plus" label="Add property" size={16} menu />
      <ToolIcon name="minus" label="Remove property" size={16} />
      <ToolIcon name="wrench" label="Configure" size={16} menu divided />
    </PropTools>
    <Box $height={61}>
      <Table>
        <colgroup><col width="66" /><col /></colgroup>
        <thead><tr><th>属性</th><th>值</th></tr></thead>
        <tbody>
          <Row $tone="dark"><td /><td /></Row>
          <Row $tone="cream"><PropName>objectName</PropName><td>Form</td></Row>
          <Row $tone="dark"><td /><td /></Row>
        </tbody>
      </Table>
      <ShortScroll />
    </Box>
    <Splitter />

    <Title>信号/槽编辑器</Title>
    <Box $height={62}>
      <Stack>
        <Table>
          <colgroup><col width="66" /><col width="66" /><col width="66" /><col /></colgroup>
          <thead><tr><th>发送者</th><th>信号</th><th>接收者</th><th>槽</th></tr></thead>
          <tbody>
            <Row><td>pushButton</td><td>clicked()</td><td>textEdit</td><td>clear()</td></Row>
            <Row $tone="selected"><td>pushButton</td><td>clicked()</td><td>Form</td><td>close()</td></Row>
          </tbody>
        </Table>
        <HScroll>
          <HThumb />
          <ScrollButton aria-label="Scroll left"><Icon name="arrowLeft" size={8} /></ScrollButton>
          <ScrollButton aria-label="Scroll right"><Icon name="arrowRight" size={8} /></ScrollButton>
        </HScroll>
      </Stack>
    </Box>
    <SignalTools>
      <SquareButton aria-label="Remove"><Icon name="redMinus" size={11} /></SquareButton>
      <SquareButton aria-label="Add"><Icon name="plus" size={11} /></SquareButton>
    </SignalTools>
    <Splitter />

    <Title>资源浏览器</Title>
    <Resources>
      <ResourceBox>&lt;resource root&gt;</ResourceBox>
      <ResourceBox />
    </Resources>
    <Splitter />

    <Title>动作编辑器</Title>
    <ActionTools>
      <ToolIcon name="new" label="New action" />
      <ToolIcon name="copy" label="Copy" />
      <ToolIcon name="paste" label="Paste" />
      <ToolIcon name="remove" label="Delete" />
      <ToolIcon name="wrench" label="Configure" menu />
      <FilterLabel htmlFor="filter">过滤器:</FilterLabel>
      <FilterInput id="filter" />
      <ToolIcon name="clear" label="Clear filter" size={5} />
    </ActionTools>
    <Box $grow>
      <Table>
        <colgroup><col width="66" /><col width="66" /><col width="66" /><col /></colgroup>
        <thead><tr><th>名称</th><th>使用</th><th>文本</th><th>快捷键</th></tr></thead>
      </Table>
    </Box>
  </RightDock>
);

const SaveDialog = () => (
  <Dialog role="dialog" aria-label="Untitled">
    <DialogTitle>
      <Icon name="qt" size={11} />
      <DialogName>Untitled</DialogName>
      <CloseButton aria-label="Close"><Icon name="cross" size={10} /></CloseButton>
    </DialogTitle>
    <DialogBody onSubmit={(e) => e.preventDefault()}>
      <FieldLabel htmlFor="look">查看:</FieldLabel>
      <LookRow>
        <Combo $width={196}>
          <IconPad><Icon name="folder" size={13} /></IconPad>
          <Select id="look" $icon>
            <option>/home/sprife/qt4/for_pc/testqt-x11</option>
          </Select>
          <ComboMark><Icon name="arrowDown" size={8} /></ComboMark>
        </Combo>
        {["prev", "next", "up", "newFolder", "listView", "detailView"].map((name) => (
          <ViewButton key={name} type="button" aria-label={name} $active={name === "listView"}>
            <Icon name={name} size={12} />
          </ViewButton>
        ))}
      </LookRow>
      <Lists>
        <ListBox>
          <Place><Icon name="computer" size={13} />计算机</Place>
          <Place><Icon name="home" size={15} />root</Place>
        </ListBox>
        <ListBox />
      </Lists>
      <Fields>
        <FieldLabel htmlFor="name">文件名称(<u>N</u>):</FieldLabel>
        <NameInput id="name" defaultValue="testx11.ui" />
        <DialogButton $default>保存(<u>S</u>)</DialogButton>
        <FieldLabel htmlFor="type">文件类型:</FieldLabel>
        <Combo>
          <Select id="type"><option>设计师 UI 文件 (*.ui)</option></Select>
          <ComboMark><Icon name="arrowDown" size={8} /></ComboMark>
        </Combo>
        <DialogButton type="button">取消</DialogButton>
      </Fields>
    </DialogBody>
    <SizeGrip />
  </Dialog>
);

export default function App() {
  return (
    <Page>
      <GlobalStyle />
      <TitleBar>
        <Icon name="qt" size={11} />
        <AppName>Qt</AppName>
        <FrameButton aria-label="Minimize"><Icon name="minimize" size={9} /></FrameButton>
        <FrameButton aria-label="Maximize"><Icon name="maximize" size={9} /></FrameButton>
        <FrameButton aria-label="Close" $close><Icon name="cross" size={9} /></FrameButton>
      </TitleBar>
      <MenuBar>
        {menus.map(([name, key]) => (
          <MenuItem key={name}>{name}(<u>{key}</u>)</MenuItem>
        ))}
      </MenuBar>
      <ToolBar>
        {tools.map((group, i) => (
          <ToolGroup key={i}>
            {group.map((name) => (
              <ToolButton key={name} aria-label={name} $active={name === "widgets"}>
                <Icon name={name} size={16} />
              </ToolButton>
            ))}
          </ToolGroup>
        ))}
      </ToolBar>
      <Workspace>
        <WidgetBox />
        <Mdi>
          <FormWindow>
            <FormTitle>
              <Icon name="designer" size={14} />
              <FormName>Form - untitled*</FormName>
              <FormButton aria-label="Shade"><Icon name="arrowUp" size={8} /></FormButton>
              <FormButton aria-label="Close"><Icon name="cross" size={8} /></FormButton>
            </FormTitle>
            <FormCanvas>
              <ExampleText>This is a example for QT-X11</ExampleText>
              <ShowButton>show</ShowButton>
            </FormCanvas>
          </FormWindow>
        </Mdi>
        <Inspectors />
      </Workspace>
      <BottomEdge />
      <SaveDialog />
    </Page>
  );
}
